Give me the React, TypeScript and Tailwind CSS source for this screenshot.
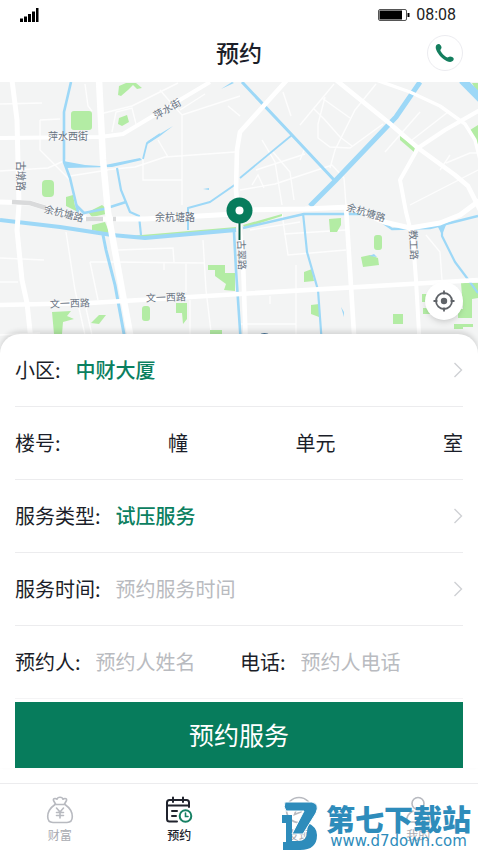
import React from "react";

const WATER = "#9dd8f7";
const PARK = "#b3eca4";

function CityMap() {
  return (
    <svg
      className="block h-[272px] w-full"
      viewBox="0 82 478 272"
      preserveAspectRatio="xMidYMin slice"
      role="img"
      aria-label="地图"
    >
      <rect x="0" y="82" width="478" height="272" fill="#f3f4f4" />

      {/* minor streets */}
      <g fill="none" stroke="#fdfdfd" strokeWidth="1.4">
        <path d="M0 104L42 103M85 84L88 106L92 111M0 171L48 168L66 160M40 120V150L70 180M40 120L60 119" />
        <path d="M104 113L132 106L178 83M112 132L116 112L132 108L136 124M104 170L135 167L165 157L235 152M143 158V180H182M182 115V205M158 140L168 157M160 90L172 104L182 115L240 96M205 94L180 110M228 106L240 116" />
        <path d="M70 176L108 170M0 258L44 260M0 282H18M66 232L75 290L85 335M90 262L98 300M90 262L112 262L205 263M118 250L173 248L174 262M203 240L206 290L212 340M186 262V292M164 263V270M86 308L92 335M190 300V340" />
        <path d="M334 84L300 125M322 98L350 118M313 108L325 120L340 137L352 146M325 97L318 124L318 138L330 147L350 148L383 124M376 84L355 110L335 150L330 168M283 92L291 116M420 112L385 152M448 112L412 140M262 140L275 162L282 205M273 152L290 172L294 200M252 185L258 175L264 188M240 190L275 184L332 165L344 178L346 205M256 170L305 154M300 160L305 148" />
        <path d="M282 214L288 255L346 250M284 234L346 230M250 230L300 222M296 265V335M240 324H296M270 296V304M426 235L440 252L442 280M446 163L470 153H478M440 170L450 155M410 205L478 170M0 335L40 333" />
      </g>

      {/* parks */}
      <g fill={PARK}>
        <rect x="71" y="111" width="21" height="19" rx="3" />
        <path d="M119 118L127 115L129 122L122 126L118 124Z" />
        <path d="M118 95L119 86L126 83H136L142 88L137 89L133 85L128 90L121 96Z" />
        <rect x="42" y="180" width="12" height="17" rx="4" />
        <path d="M66 197L73 195L75 206L78 212L66 206Z" />
        <path d="M88 212L102 205L107 209L106 214L92 217ZM92 225L105 222L110 234L92 230Z" />
        <path d="M130 236L236 227V229L150 236Z" />
        <path d="M52 312L71 311L67 316L74 319L63 322L62 334H54Z" />
        <path d="M91 323L99 315H106L99 324Z" />
        <rect x="142" y="306" width="8" height="15" rx="3" />
        <path d="M176 303H187V319L183 324L182 313H176Z" />
        <path d="M208 265H225V273H235V291L224 290L226 284L215 276V270H208Z" />
        <path d="M210 330H222V337H210Z" />
        <path d="M243 225L282 214V216L245 228Z" />
        <path d="M329 219L341 218V225L337 232H330Z" />
        <rect x="374" y="235" width="8" height="15" rx="3" />
        <path d="M361 257L370 255L378 258L379 265L363 267Z" />
        <path d="M304 272L312 269L314 281L304 282Z" />
        <path d="M311 305L319 304V317L311 314Z" />
        <rect x="393" y="314" width="10" height="10" />
        <path d="M400 136L415 147L414 152L400 140Z" />
        <path d="M478 125L470 130L478 145ZM472 83H478V94Z" />
        <path d="M461 283H478V298L472 299V318H458V309H463ZM422 294H432V302H422ZM423 308H430V314H423ZM454 324H473V327H463V329H454Z" />
      </g>

      {/* rivers and canals */}
      <g fill="none" stroke={WATER} strokeLinejoin="round">
        <path d="M71 82L64 112V162L70 178L78 212" strokeWidth="2.6" />
        <path d="M143 159L147 143L160 134" strokeWidth="1.8" />
        <path d="M117 168L121 190L130 212L139 216L141 235" strokeWidth="2.2" />
        <path d="M76 205L84 213L104 209L126 202" strokeWidth="2.6" />
        <path d="M188 230V208L210 202L236 184" strokeWidth="2" />
        <path d="M0 220L60 227L112 235L145 238L236 230" strokeWidth="4" />
        <path d="M243 228L304 214L370 214L392 229L430 228L478 216" strokeWidth="2.4" />
        <path d="M103 235L106 250L115 285L126 345" strokeWidth="3" />
        <path d="M234 232L236 270L241 345" strokeWidth="2.6" />
        <path d="M303 213L307 252L318 290L322 345" strokeWidth="2.2" />
        <path d="M242 82L292 135L335 181" strokeWidth="3" />
        <path d="M240 178L292 135" strokeWidth="1.8" />
        <path d="M420 82L396 117L335 181L310 206" strokeWidth="5" />
        <path d="M442 226V236L455 262L467 278L478 293" strokeWidth="2.2" />
        <path d="M462 80L482 100" strokeWidth="8" />
      </g>
      <g fill={WATER}>
        <path d="M63 161L85 165L100 166L140 158L142 160L112 167L66 168Z" />
        <path d="M146 145L148 141L173 126L160 136Z" />
        <path d="M203 189L209 188V190ZM221 89L232 82L234 83ZM369 256L374 254L377 257ZM341 307L344 312V317ZM437 225H446L442 235Z" />
      </g>

      {/* main roads */}
      <g fill="none" stroke="#ffffff" strokeLinejoin="round">
        <path d="M12 80L17 120L19 205L17 230L22 280L27 303L32 350" strokeWidth="5" />
        <path d="M99 80L103 160L108 212L113 240L122 290L133 350" strokeWidth="6.5" />
        <path d="M0 138L100 137L123 134L158 113L210 82" strokeWidth="4" />
        <path d="M0 202L30 203L62 213L90 219H145L235 214L243 210L305 209L350 207L384 222L410 228L440 223L460 215L480 200" strokeWidth="5" />
        <path d="M0 305L90 303L240 294L478 280" strokeWidth="4.6" />
        <path d="M287 80L240 132L237 150L236 190L238 212L243 260L246 350" strokeWidth="4.6" />
        <path d="M336 80L388 122L418 148L455 175L468 186L480 210" strokeWidth="4.6" />
        <path d="M376 80L410 92L440 106L465 124L475 140L480 160" strokeWidth="3.4" />
        <path d="M480 110L445 130L418 148L400 180L406 212L413 240L416 280L420 350" strokeWidth="4" />
        <path d="M346 207L350 270L355 350" strokeWidth="4.6" />
      </g>
      <path d="M12 202L30 203L46 208M86 219H103M113 219H116" fill="none" stroke="#d9dadb" strokeWidth="4.6" />

      {/* street names */}
      <g
        fill="#687381"
        fontSize="10"
        textAnchor="middle"
        className="font-['Noto_Sans_CJK_SC',sans-serif]"
      >
        <text x="68" y="140">萍水西街</text>
        <text transform="translate(169 112) rotate(-30)">萍水街</text>
        <text transform="translate(17 176) rotate(90)">古墩路</text>
        <text transform="translate(63 217) rotate(14)">余杭塘路</text>
        <text x="175" y="221">余杭塘路</text>
        <text transform="translate(365 216) rotate(17)">余杭塘路</text>
        <text transform="translate(238 255) rotate(88)">古翠路</text>
        <text transform="translate(410 245) rotate(88)">教工路</text>
        <text transform="translate(70 307) rotate(-2)">文一西路</text>
        <text transform="translate(166 301) rotate(-2)">文一西路</text>
      </g>

      <circle cx="264.5" cy="341" r="8" fill="#4a7396" />

      {/* pin */}
      <path d="M239.5 220V240" stroke="#06593f" strokeWidth="2" />
      <circle cx="239.5" cy="210.5" r="13" fill="#077c5c" />
      <circle cx="239.5" cy="210.5" r="4" fill="#ffffff" />
    </svg>
  );
}

function LocateIcon() {
  return (
    <svg viewBox="0 0 22 22" className="size-[22px]" fill="none" stroke="#5f6368" strokeWidth="1.8" aria-hidden="true">
      <circle cx="11" cy="11" r="8" />
      <circle cx="11" cy="11" r="3.2" fill="#5f6368" stroke="none" />
      <path d="M11 0.5V4.5M11 17.5V21.5M0.5 11H4.5M17.5 11H21.5" />
    </svg>
  );
}

function Chevron() {
  return (
    <svg viewBox="0 0 10 16" className="h-4 w-2.5 shrink-0" fill="none" stroke="#cfd1d4" strokeWidth="1.4" aria-hidden="true">
      <path d="M1.5 1L8.5 8L1.5 15" />
    </svg>
  );
}

function PickerRow({ label, value, chosen }: { label: string; value: string; chosen: boolean }) {
  return (
    <button type="button" className="flex h-[73px] w-full items-center border-b border-[#ececee] text-left">
      <span>{label}:</span>
      <span className={chosen ? "ml-[15px] font-medium text-[#0b8060]" : "ml-[15px] text-[#b9bbc0]"}>{value}</span>
      <span className="ml-auto">
        <Chevron />
      </span>
    </button>
  );
}

function MoneyBagIcon() {
  return (
    <svg viewBox="0 0 28 28" className="size-7" fill="none" stroke="#b8bac0" strokeWidth="1.6" strokeLinecap="round" strokeLinejoin="round" aria-hidden="true">
      <path d="M9.5 8L7.5 4.5Q7 2.5 9 2.5Q10.5 2.5 11 3.2Q11.5 1.2 14 1.2Q16.5 1.2 17 3.2Q17.5 2.5 19 2.5Q21 2.5 20.5 4.5L18.5 8" />
      <path d="M9 8.5H19C22.5 11 26.3 15.5 26.3 20.5C26.3 24.5 24.5 26.5 21 26.5H7C3.5 26.5 1.7 24.5 1.7 20.5C1.7 15.5 5.5 11 9 8.5Z" />
      <path d="M10.5 12L14 16L17.5 12M14 16V22M10.5 16.5H17.5M10.5 19.5H17.5" />
    </svg>
  );
}

function CalendarIcon() {
  return (
    <svg viewBox="0 0 28 28" className="size-7" fill="none" stroke="#20232d" strokeWidth="2" strokeLinecap="round" aria-hidden="true">
      <path d="M12 25.5H4.5Q2 25.5 2 23V6.5Q2 4 4.5 4H21.5Q24 4 24 6.5V11M2 9.5H24M8 1.5V6M18 1.5V6M7 15H12M7 20H11" />
      <circle cx="20.5" cy="20" r="5.8" stroke="#178064" />
      <path d="M20.5 17V20.5H23" stroke="#178064" strokeWidth="1.6" />
    </svg>
  );
}

function CompassIcon() {
  return (
    <svg viewBox="0 0 28 28" className="size-7" fill="none" stroke="#b8bac0" strokeWidth="1.6" aria-hidden="true">
      <circle cx="14" cy="14" r="12.5" />
      <path d="M18.5 9.5L16 16L9.5 18.5L12 12Z" />
    </svg>
  );
}

function PersonIcon() {
  return (
    <svg viewBox="0 0 28 28" className="size-7" fill="none" stroke="#b8bac0" strokeWidth="1.6" strokeLinecap="round" aria-hidden="true">
      <circle cx="14" cy="7.5" r="6" />
      <path d="M9 15Q2.5 18 2.5 26H25.5Q25.5 18 19 15" />
    </svg>
  );
}

const tabs = [
  { name: "财富", icon: <MoneyBagIcon />, current: false },
  { name: "预约", icon: <CalendarIcon />, current: true },
  { name: "发现", icon: <CompassIcon />, current: false },
  { name: "我的", icon: <PersonIcon />, current: false },
];

export default function App() {
  return (
    <div className="min-h-screen bg-white font-['Noto_Sans_CJK_SC',sans-serif] text-[#1b1e29]">
      <div className="flex h-[30px] items-center justify-between pr-[22px] pl-5 text-black">
        <svg viewBox="0 0 19 14" className="h-3.5 w-[19px]" aria-hidden="true">
          <path d="M0 10.5H3V14H0ZM4 8.5H7V14H4ZM8 6H11V14H8ZM12 3.5H15V14H12ZM16 0H18.5V14H16Z" />
        </svg>
        <div className="flex items-center gap-1.5">
          <svg viewBox="0 0 32 12" className="h-3 w-8" aria-hidden="true">
            <rect x="0.5" y="0.5" width="28" height="11" rx="1.5" fill="#ffffff" stroke="#555555" />
            <rect x="1.5" y="1.5" width="22.5" height="9" />
            <path d="M29.5 4H31.5V8H29.5Z" />
          </svg>
          <span className="font-[Roboto,sans-serif] text-base text-[#222222]">08:08</span>
        </div>
      </div>

      <header className="grid h-[52px] grid-cols-[1fr_auto_1fr] items-center px-[15px] pb-1.5">
        <h1 className="col-start-2 pb-0.5 text-[23px] font-medium">预约</h1>
        <button type="button" aria-label="拨打电话" className="flex size-9 items-center justify-center justify-self-end rounded-full border border-[#ececf0]">
          <svg viewBox="0 0 20 20" className="size-5" fill="#147e5e" aria-hidden="true">
            <path d="M2 1.5C3.5 0.5 5 1 5.8 2.5C6.6 4 7 5 5.8 6.2C5.2 6.9 5.3 7.6 5.9 8.6C7 10.5 9 12.6 11.2 13.9C12.3 14.5 12.9 14.6 13.6 14C14.7 13.1 15.6 13.3 17.2 14.1C18.9 15 19.2 16.2 18.2 17.6C16.8 19.3 14.4 19.3 12 18.2C7.6 16.2 3.3 11.8 1.4 7.3C0.4 4.9 0.4 2.7 2 1.5Z" />
          </svg>
        </button>
      </header>

      <div className="relative">
        <CityMap />
        <button type="button" aria-label="定位" className="absolute right-[15px] bottom-[34px] flex size-[38px] items-center justify-center rounded-full bg-white shadow-md">
          <LocateIcon />
        </button>
      </div>

      <form className="relative -mt-5 rounded-t-[20px] bg-white px-[15px] text-xl shadow-[0_-3px_5px_rgba(0,0,0,0.12)]" onSubmit={(e) => e.preventDefault()}>
        <PickerRow label="小区" value="中财大厦" chosen />
        <div className="flex h-[73px] items-center border-b border-[#ececee]">
          <label htmlFor="building">楼号:</label>
          <input id="building" className="w-0 flex-1 px-2 text-center outline-none" />
          <label htmlFor="building">幢</label>
          <input id="unit" className="w-0 flex-1 px-2 text-center outline-none" />
          <label htmlFor="unit">单元</label>
          <input id="room" className="w-0 flex-1 px-2 text-center outline-none" />
          <label htmlFor="room">室</label>
        </div>
        <PickerRow label="服务类型" value="试压服务" chosen />
        <PickerRow label="服务时间" value="预约服务时间" chosen={false} />
        <div className="grid h-[73px] grid-cols-2 items-center gap-x-0.5 border-b border-[#f4f4f5]">
          <div className="flex items-center">
            <label htmlFor="name">预约人:</label>
            <input id="name" placeholder="预约人姓名" className="ml-[15px] w-0 flex-1 outline-none placeholder:text-[#b9bbc0]" />
          </div>
          <div className="flex items-center">
            <label htmlFor="phone">电话:</label>
            <input id="phone" type="tel" placeholder="预约人电话" className="ml-[15px] w-0 flex-1 outline-none placeholder:text-[#b9bbc0]" />
          </div>
        </div>
        <button type="submit" className="mt-[3px] h-[66px] w-full bg-[#077c5c] pb-0.5 text-[25px] text-white">
          预约服务
        </button>
      </form>

      <div className="relative mt-[15px]">
        <nav className="grid h-[67px] grid-cols-4 border-t border-[#ececee]">
          {tabs.map((tab) => (
            <a
              key={tab.name}
              href="#"
              aria-current={tab.current ? "page" : undefined}
              className={
                tab.current
                  ? "flex flex-col items-center pt-3 text-xs font-medium text-[#20232d]"
                  : "flex flex-col items-center pt-3 text-xs text-[#a9abb1]"
              }
            >
              {tab.icon}
              <span className="mt-[3px]">{tab.name}</span>
            </a>
          ))}
        </nav>

        <div className="pointer-events-none absolute right-[7px] bottom-0 flex items-end gap-2 text-[#2e8cbb]">
          <svg viewBox="0 0 36 49" className="h-[49px] w-9" aria-hidden="true">
            <path d="M0 14H10V40H16Q25 40 25 31L26 22Q35 26 35 34Q35 49 18 49H1V41H4V22H0Z" fill="currentColor" />
            <path d="M3 1H30Q38 3 34 12L21 33H10L22 10H4Q1 6 3 1Z" fill="currentColor" stroke="#ffffff" strokeWidth="1" />
          </svg>
          <div className="flex flex-col items-center">
            <span className="text-[29px] leading-[28px] font-black">第七下载站</span>
            <span className="font-['DejaVu_Sans',sans-serif] text-[15px] leading-[18px]">www.d7down.com</span>
          </div>
        </div>
      </div>
    </div>
  );
}
